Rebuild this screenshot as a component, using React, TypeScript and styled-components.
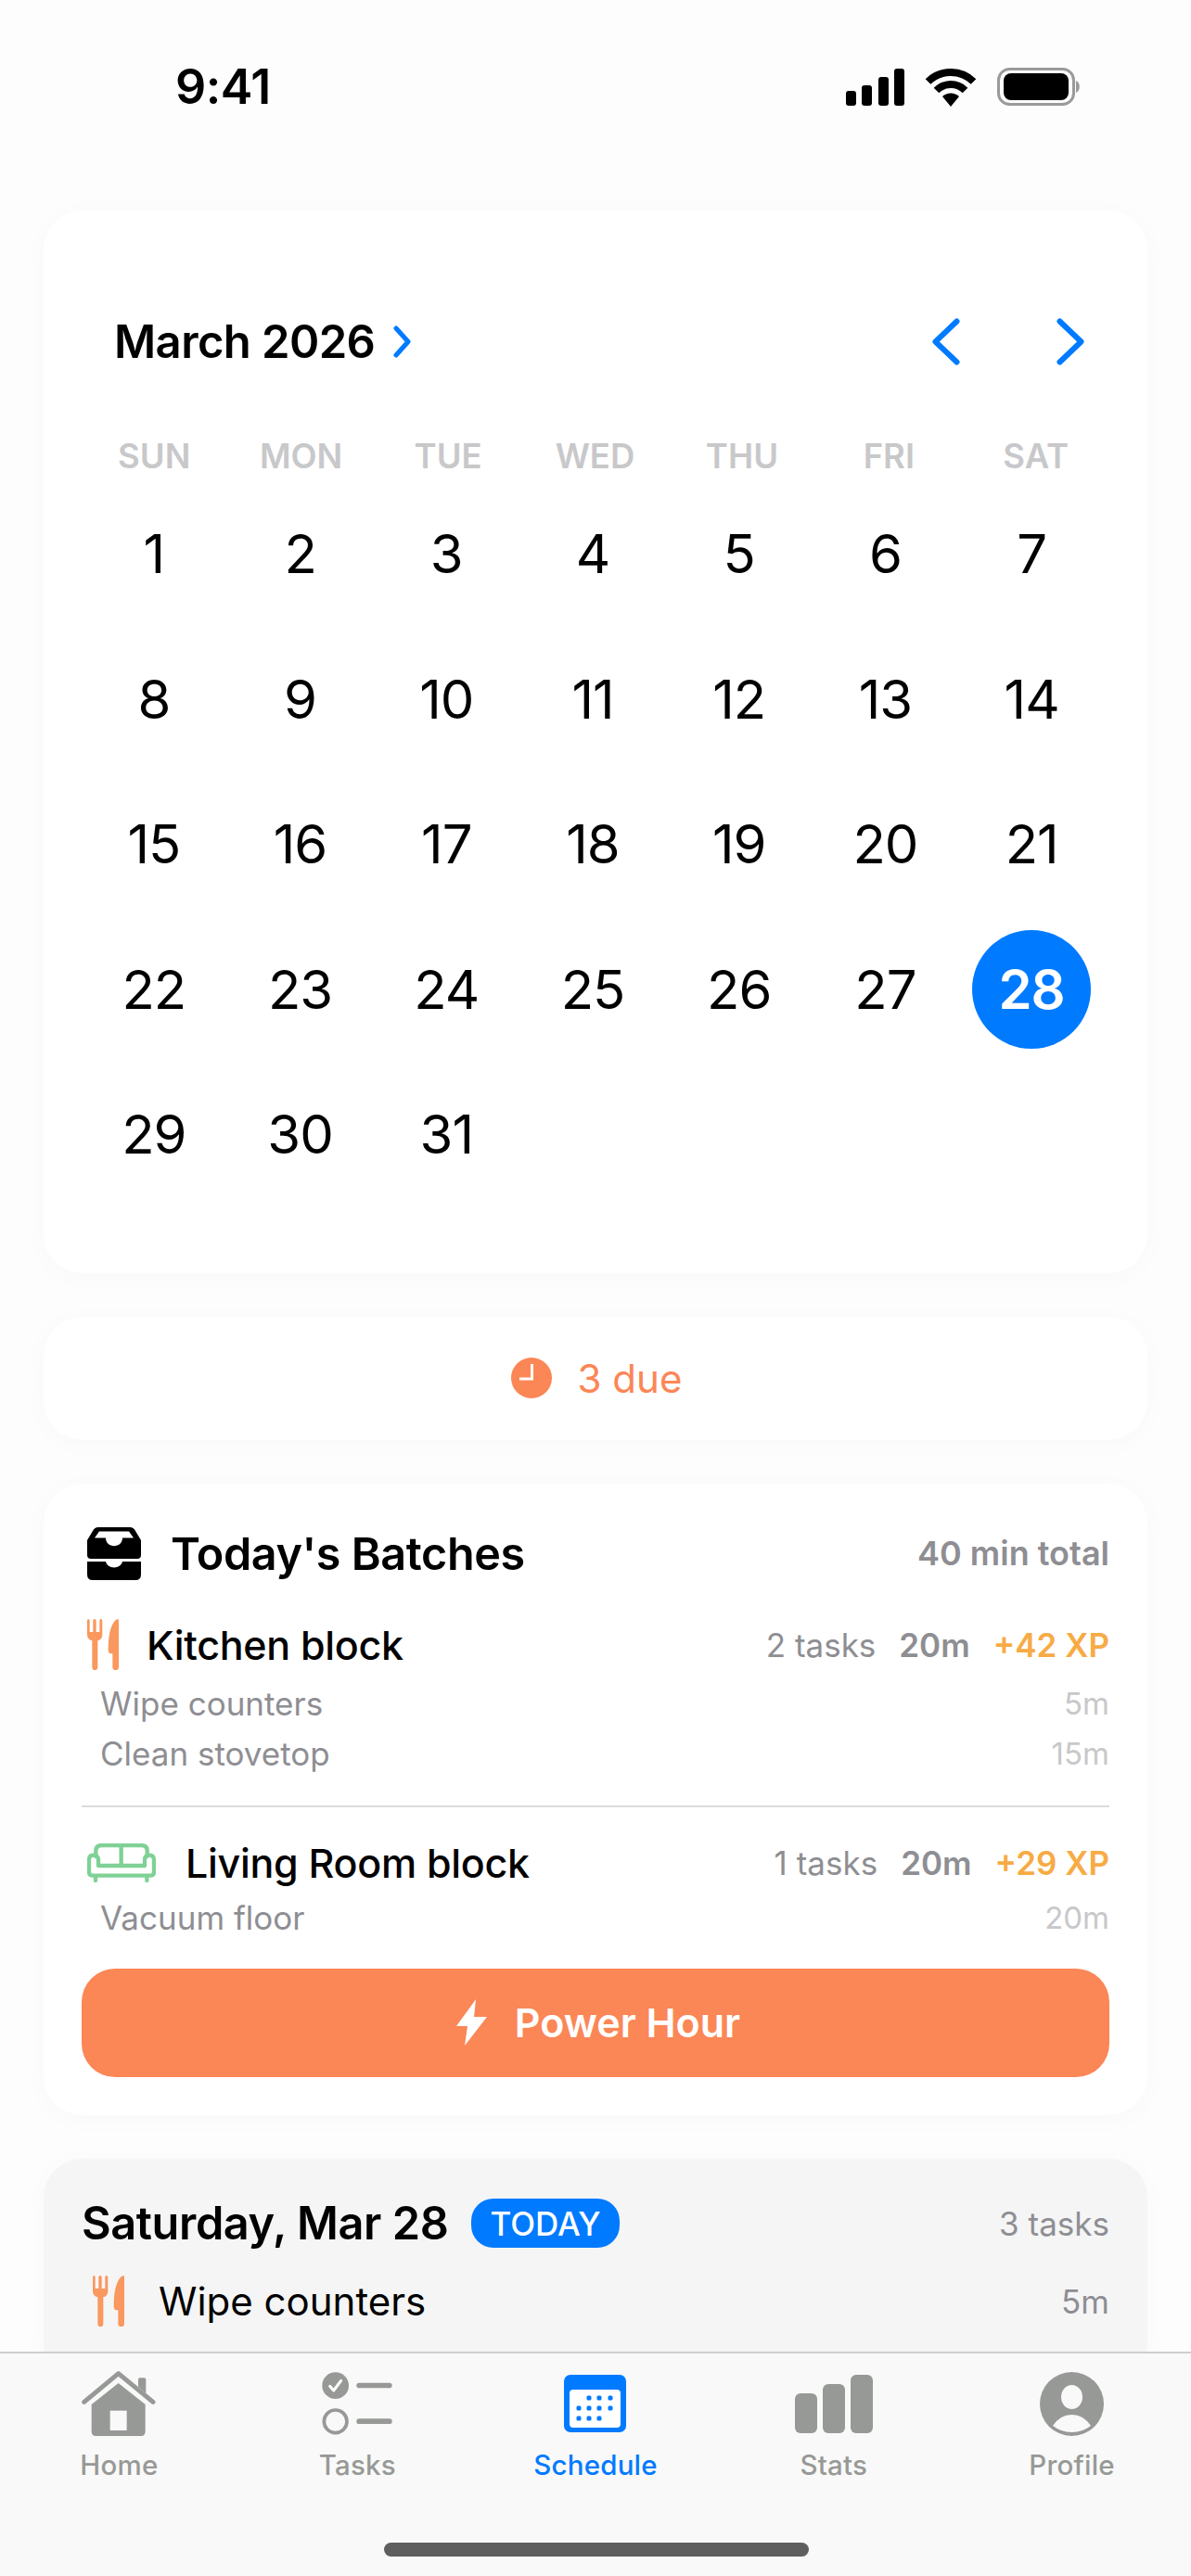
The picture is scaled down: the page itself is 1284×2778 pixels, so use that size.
import React from "react";
import styled, { createGlobalStyle } from "styled-components";

const GlobalStyle = createGlobalStyle`
  html, body {
    margin: 0;
    padding: 0;
    background: #fdfdfd;
    font-family: "Inter", "Liberation Sans", sans-serif;
    color: #000;
  }
  * { box-sizing: border-box; }
`;

const BLUE = "#007aff";
const ORANGE = "#fb8656";
const GRAY = "#8e8e93";
const LIGHT = "#c8c8ca";
const TAB_GRAY = "#979996";

const Screen = styled.div`
  position: relative;
  width: 1284px;
  height: 2778px;
  overflow: hidden;
  background: #fdfdfd;
`;

const StatusBar = styled.div`
  height: 227px;
  display: flex;
  align-items: flex-start;
  justify-content: space-between;
  padding: 66px 119px 0 189px;
`;

const Time = styled.div`
  font-size: 52px;
  font-weight: 600;
  line-height: 56px;
  letter-spacing: -0.5px;
`;

const StatusIcons = styled.div`
  display: flex;
  align-items: center;
  gap: 22px;
  padding-top: 7px;
`;

const Content = styled.div`
  display: flex;
  flex-direction: column;
  gap: 47px;
  padding: 0 47px;
`;

const Card = styled.div<{ $muted?: boolean }>`
  background: ${(p) => (p.$muted ? "#f5f5f5" : "#fff")};
  border-radius: 42px;
  box-shadow: 0 4px 28px rgba(0, 0, 0, 0.025);
`;

const CalendarCard = styled(Card)`
  padding: 111px 46px 71px 40px;
`;

const CalendarHeader = styled.div`
  display: flex;
  align-items: center;
  justify-content: space-between;
  height: 60px;
  padding: 0 22px 0 36px;
  margin-bottom: 74px;
`;

const MonthButton = styled.div`
  display: flex;
  align-items: center;
  gap: 20px;
  font-size: 49px;
  font-weight: 600;
  letter-spacing: -0.6px;
`;

const NavButtons = styled.div`
  display: flex;
  align-items: center;
  gap: 104px;
`;

const WeekRow = styled.div`
  display: grid;
  grid-template-columns: repeat(7, 1fr);
  height: 40px;
  margin: 0 -5px 7px 0;
`;

const WeekDay = styled.div`
  text-align: center;
  font-size: 36.5px;
  font-weight: 600;
  line-height: 40px;
  color: ${LIGHT};
`;

const DayGrid = styled.div`
  display: grid;
  grid-template-columns: repeat(7, 1fr);
  grid-auto-rows: 156.5px;
`;

const DayCell = styled.div`
  display: flex;
  align-items: center;
  justify-content: center;
`;

const DayNumber = styled.div<{ $selected?: boolean }>`
  width: 128px;
  height: 128px;
  border-radius: 50%;
  display: flex;
  align-items: center;
  justify-content: center;
  font-size: 58px;
  font-weight: ${(p) => (p.$selected ? 600 : 400)};
  letter-spacing: -1px;
  color: ${(p) => (p.$selected ? "#fff" : "#000")};
  background: ${(p) => (p.$selected ? BLUE : "transparent")};
`;

const DueCard = styled(Card)`
  height: 133px;
  display: flex;
  align-items: center;
  justify-content: center;
  gap: 28px;
  padding-left: 2px;
  font-size: 42px;
  color: ${ORANGE};
`;

const BatchCard = styled(Card)`
  padding: 47px 41px 41px 41px;
`;

const BatchHeader = styled.div`
  display: flex;
  align-items: center;
  justify-content: space-between;
  height: 57px;
  padding-left: 6px;
`;

const BatchTitle = styled.div`
  display: flex;
  align-items: center;
  gap: 32px;
  font-size: 48.5px;
  font-weight: 600;
  letter-spacing: -0.4px;
`;

const TotalLabel = styled.div`
  font-size: 36px;
  font-weight: 600;
  color: ${GRAY};
`;

const BlockRow = styled.div<{ $top: number }>`
  display: flex;
  align-items: center;
  justify-content: space-between;
  height: 56px;
  margin-top: ${(p) => p.$top}px;
  padding-left: 6px;
`;

const BlockName = styled.div<{ $gap: number }>`
  display: flex;
  align-items: center;
  gap: ${(p) => p.$gap}px;
  font-size: 43px;
  font-weight: 500;
  letter-spacing: -0.3px;
`;

const BlockStats = styled.div`
  display: flex;
  align-items: baseline;
  gap: 25px;
  font-size: 35px;
`;

const StatTasks = styled.span`
  color: ${GRAY};
`;

const StatTime = styled.span`
  color: ${GRAY};
  font-weight: 600;
`;

const StatXp = styled.span`
  color: #f7ab45;
  font-weight: 600;
`;

const SubRow = styled.div<{ $top?: number }>`
  display: flex;
  align-items: center;
  justify-content: space-between;
  height: 54px;
  margin-top: ${(p) => p.$top ?? 0}px;
  padding-left: 20px;
  font-size: 35px;
  color: ${GRAY};
`;

const SubTime = styled.span`
  font-size: 33px;
  color: ${LIGHT};
`;

const Divider = styled.div`
  height: 2px;
  background: #dcdcdc;
  margin-top: 29px;
`;

const PowerButton = styled.div`
  height: 117px;
  margin-top: 28px;
  padding-left: 6px;
  border-radius: 36px;
  background: ${ORANGE};
  color: #fff;
  display: flex;
  align-items: center;
  justify-content: center;
  gap: 30px;
  font-size: 43px;
  font-weight: 600;
`;

const DayCard = styled(Card)`
  padding: 42px 41px 60px 41px;
`;

const DayHeader = styled.div`
  display: flex;
  align-items: center;
  justify-content: space-between;
  height: 56px;
`;

const DayTitle = styled.div`
  display: flex;
  align-items: center;
  gap: 25px;
  font-size: 48.7px;
  font-weight: 600;
  letter-spacing: -0.4px;
`;

const TodayBadge = styled.span`
  height: 53px;
  padding: 0 20px;
  border-radius: 24px;
  background: ${BLUE};
  color: #fff;
  display: flex;
  align-items: center;
  font-size: 35px;
  font-weight: 500;
  letter-spacing: 0;
`;

const TaskCount = styled.div`
  font-size: 35px;
  color: ${GRAY};
`;

const TaskRow = styled.div`
  display: flex;
  align-items: center;
  justify-content: space-between;
  height: 56px;
  margin-top: 28px;
  padding-left: 12px;
  font-size: 42px;
`;

const TaskName = styled.div`
  display: flex;
  align-items: center;
  gap: 37px;
`;

const TaskTime = styled.span`
  font-size: 35px;
  color: ${GRAY};
`;

const TabBar = styled.div`
  position: absolute;
  left: 0;
  right: 0;
  bottom: 0;
  height: 242px;
  display: grid;
  grid-template-columns: repeat(5, 1fr);
  align-items: start;
  padding-top: 18px;
  background: #f8f9f8;
  border-top: 2px solid #cfcfcf;
`;

const TabItem = styled.div<{ $active?: boolean }>`
  display: flex;
  flex-direction: column;
  align-items: center;
  color: ${(p) => (p.$active ? BLUE : TAB_GRAY)};
  font-size: 29.5px;
  font-weight: 500;
  letter-spacing: 0.2px;
`;

const TabIcon = styled.div`
  height: 72px;
  display: flex;
  align-items: center;
  justify-content: center;
  margin-bottom: 12px;
`;

const HomeIndicator = styled.div`
  position: absolute;
  left: 414px;
  top: 204px;
  width: 458px;
  height: 15px;
  border-radius: 8px;
  background: #5f5f5f;
`;

const SignalIcon = () => (
  <svg width="63" height="40" viewBox="0 0 63 40">
    <rect x="0" y="24" width="11" height="16" rx="3" />
    <rect x="17" y="18" width="11" height="22" rx="3" />
    <rect x="35" y="9" width="11" height="31" rx="3" />
    <rect x="52" y="0" width="11" height="40" rx="3" />
  </svg>
);

const WifiIcon = () => (
  <svg width="56" height="41" viewBox="0 0 56 41" fill="none" stroke="#000" strokeWidth="8">
    <path d="M3.5 14 A35 35 0 0 1 52.5 14" />
    <path d="M12.5 23.5 A22 22 0 0 1 43.5 23.5" />
    <path d="M19 30 L28 41 L37 30 A13 13 0 0 0 19 30Z" fill="#000" stroke="none" />
  </svg>
);

const BatteryIcon = () => (
  <svg width="90" height="42" viewBox="0 0 90 42">
    <rect x="1.5" y="1.5" width="81" height="38" rx="12" fill="none" stroke="#9a9a9a" strokeWidth="3" />
    <rect x="7" y="6" width="70" height="29" rx="8" />
    <path d="M85 14 a6 7 0 0 1 0 13Z" fill="#9a9a9a" />
  </svg>
);

const Chevron = ({ dir, w, h, sw }: { dir: "left" | "right"; w: number; h: number; sw: number }) => {
  const p = sw / 2 + 0.5;
  const d =
    dir === "right"
      ? `M${p} ${p} L${w - p} ${h / 2} L${p} ${h - p}`
      : `M${w - p} ${p} L${p} ${h / 2} L${w - p} ${h - p}`;
  return (
    <svg width={w} height={h} viewBox={`0 0 ${w} ${h}`} fill="none" stroke={BLUE} strokeWidth={sw} strokeLinecap="round" strokeLinejoin="round">
      <path d={d} />
    </svg>
  );
};

const ClockIcon = () => (
  <svg width="44" height="44" viewBox="0 0 44 44">
    <circle cx="22" cy="22" r="22" fill={ORANGE} />
    <path d="M22.5 7 V23 H9" fill="none" stroke="#fff" strokeWidth="3" />
  </svg>
);

const TrayIcon = () => (
  <svg width="58" height="57" viewBox="0 0 58 57">
    <path d="M12 0 H46 Q50 0 52 4 L58 14 V30 Q58 34 54 34 H4 Q0 34 0 30 V14 L6 4 Q8 0 12 0Z" />
    <path d="M13 4.5 H45 L50 11.5 H38 C38 23 20 23 20 11.5 H8 Z" fill="#fff" />
    <path d="M0 37 H20 C22 45.5 36 45.5 38 37 H58 V51 Q58 57 52 57 H6 Q0 57 0 51 Z" />
  </svg>
);

const CutleryIcon = () => (
  <svg width="34" height="55" viewBox="0 0 102 165" fill="#f9985f">
    <path d="M0 5 Q0 0 4 0 Q8 0 8 5 V42 H19 V5 Q19 0 24 0 Q29 0 29 5 V42 H40 V5 Q40 0 44 0 Q49 0 49 5 V50 Q49 66 34 70 V155 Q34 165 25 165 Q16 165 16 155 V70 Q0 66 0 50Z" />
    <path d="M100 0 Q102 0 102 8 V155 Q102 165 92 165 Q82 165 82 155 V112 H76 Q68 110 68 98 Q68 30 90 5 Q95 0 100 0Z" />
  </svg>
);

const SofaIcon = () => (
  <svg width="74" height="42" viewBox="0 0 222 126" fill="none" stroke="#7fd195" strokeWidth="13" strokeLinejoin="round" strokeLinecap="round">
    <path d="M28 42 V24 Q28 6 46 6 H176 Q194 6 194 24 V42" />
    <path d="M110 6 V72" />
    <path d="M36 72 H186 V54 Q186 38 200 38 Q216 38 216 54 V92 Q216 104 204 104 H18 Q6 104 6 92 V54 Q6 38 20 38 Q36 38 36 54 Z" />
    <path d="M27 106 V120 M193 106 V120" />
  </svg>
);

const BoltIcon = () => (
  <svg width="33" height="50" viewBox="0 0 33 50" fill="#fff">
    <path d="M21 0 L0 29 H12 L9 50 L33 19 H19 Z" strokeLinejoin="round" />
  </svg>
);

const HomeTabIcon = () => (
  <svg width="80" height="70" viewBox="0 0 240 210">
    <path d="M8 100 L119 8 L231 100" fill="none" stroke={TAB_GRAY} strokeWidth="15" strokeLinecap="round" strokeLinejoin="round" />
    <path d="M183 50 V28 Q183 22 189 22 H202 Q208 22 208 28 V72Z" fill={TAB_GRAY} />
    <path d="M119 39 L206 108 V196 Q206 210 192 210 H46 Q32 210 32 196 V108Z" fill={TAB_GRAY} />
    <rect x="92" y="128" width="54" height="64" fill="#f8f9f8" />
  </svg>
);

const TasksTabIcon = () => (
  <svg width="76" height="68" viewBox="0 0 228 204">
    <circle cx="44" cy="44" r="43" fill={TAB_GRAY} />
    <path d="M26 46 L38 60 L62 28" fill="none" stroke="#fff" strokeWidth="9" strokeLinecap="round" strokeLinejoin="round" />
    <circle cx="44" cy="160" r="37" fill="none" stroke={TAB_GRAY} strokeWidth="11" />
    <rect x="112" y="35" width="115" height="17" rx="8.5" fill={TAB_GRAY} />
    <rect x="112" y="151" width="115" height="17" rx="8.5" fill={TAB_GRAY} />
  </svg>
);

const ScheduleTabIcon = () => (
  <svg width="67" height="62" viewBox="0 0 67 62">
    <rect width="67" height="62" rx="7" fill={BLUE} />
    <rect x="6" y="16" width="55" height="41" rx="4" fill="#fff" />
    {[
      [27, 25], [38, 25], [50, 25],
      [16, 36], [27, 36], [38, 36], [50, 36],
      [16, 47], [27, 47], [38, 47],
    ].map(([x, y]) => (
      <rect key={`${x}-${y}`} x={x - 2.5} y={y - 2.5} width="5" height="5" rx="1.5" fill={BLUE} />
    ))}
  </svg>
);

const StatsTabIcon = () => (
  <svg width="84" height="63" viewBox="0 0 84 63" fill={TAB_GRAY}>
    <rect x="0" y="20" width="24" height="43" rx="6" />
    <rect x="30" y="10" width="24" height="53" rx="6" />
    <rect x="60" y="0" width="24" height="63" rx="6" />
  </svg>
);

const ProfileTabIcon = () => (
  <svg width="69" height="69" viewBox="0 0 69 69">
    <circle cx="34.5" cy="34.5" r="34.5" fill={TAB_GRAY} />
    <ellipse cx="34.5" cy="27" rx="11.5" ry="13" fill="#f8f9f8" />
    <path d="M14 58 Q22 46 34.5 46 Q47 46 55 58 Q46 65 34.5 65 Q23 65 14 58Z" fill="#f8f9f8" />
  </svg>
);

const WEEK_DAYS = ["SUN", "MON", "TUE", "WED", "THU", "FRI", "SAT"];
const DAYS = Array.from({ length: 31 }, (_, i) => i + 1);

const TABS = [
  { label: "Home", icon: <HomeTabIcon /> },
  { label: "Tasks", icon: <TasksTabIcon /> },
  { label: "Schedule", icon: <ScheduleTabIcon />, active: true },
  { label: "Stats", icon: <StatsTabIcon /> },
  { label: "Profile", icon: <ProfileTabIcon /> },
];

export default function App() {
  return (
    <Screen>
      <GlobalStyle />
      <StatusBar>
        <Time>9:41</Time>
        <StatusIcons>
          <SignalIcon />
          <WifiIcon />
          <BatteryIcon />
        </StatusIcons>
      </StatusBar>

      <Content>
        <CalendarCard>
          <CalendarHeader>
            <MonthButton>
              March 2026
              <Chevron dir="right" w={19} h={35} sw={5} />
            </MonthButton>
            <NavButtons>
              <Chevron dir="left" w={30} h={51} sw={6} />
              <Chevron dir="right" w={30} h={51} sw={6} />
            </NavButtons>
          </CalendarHeader>
          <WeekRow>
            {WEEK_DAYS.map((d) => (
              <WeekDay key={d}>{d}</WeekDay>
            ))}
          </WeekRow>
          <DayGrid>
            {DAYS.map((d) => (
              <DayCell key={d}>
                <DayNumber $selected={d === 28}>{d}</DayNumber>
              </DayCell>
            ))}
          </DayGrid>
        </CalendarCard>

        <DueCard>
          <ClockIcon />
          3 due
        </DueCard>

        <BatchCard>
          <BatchHeader>
            <BatchTitle>
              <TrayIcon />
              Today's Batches
            </BatchTitle>
            <TotalLabel>40 min total</TotalLabel>
          </BatchHeader>
          <BlockRow $top={42}>
            <BlockName $gap={30}>
              <CutleryIcon />
              Kitchen block
            </BlockName>
            <BlockStats>
              <StatTasks>2 tasks</StatTasks>
              <StatTime>20m</StatTime>
              <StatXp>+42 XP</StatXp>
            </BlockStats>
          </BlockRow>
          <SubRow $top={8}>
            Wipe counters
            <SubTime>5m</SubTime>
          </SubRow>
          <SubRow>
            Clean stovetop
            <SubTime>15m</SubTime>
          </SubRow>
          <Divider />
          <BlockRow $top={32}>
            <BlockName $gap={32}>
              <SofaIcon />
              Living Room block
            </BlockName>
            <BlockStats>
              <StatTasks>1 tasks</StatTasks>
              <StatTime>20m</StatTime>
              <StatXp>+29 XP</StatXp>
            </BlockStats>
          </BlockRow>
          <SubRow $top={4}>
            Vacuum floor
            <SubTime>20m</SubTime>
          </SubRow>
          <PowerButton>
            <BoltIcon />
            Power Hour
          </PowerButton>
        </BatchCard>

        <DayCard $muted>
          <DayHeader>
            <DayTitle>
              Saturday, Mar 28
              <TodayBadge>TODAY</TodayBadge>
            </DayTitle>
            <TaskCount>3 tasks</TaskCount>
          </DayHeader>
          <TaskRow>
            <TaskName>
              <CutleryIcon />
              Wipe counters
            </TaskName>
            <TaskTime>5m</TaskTime>
          </TaskRow>
        </DayCard>
      </Content>

      <TabBar>
        {TABS.map((t) => (
          <TabItem key={t.label} $active={t.active}>
            <TabIcon>{t.icon}</TabIcon>
            {t.label}
          </TabItem>
        ))}
        <HomeIndicator />
      </TabBar>
    </Screen>
  );
}
